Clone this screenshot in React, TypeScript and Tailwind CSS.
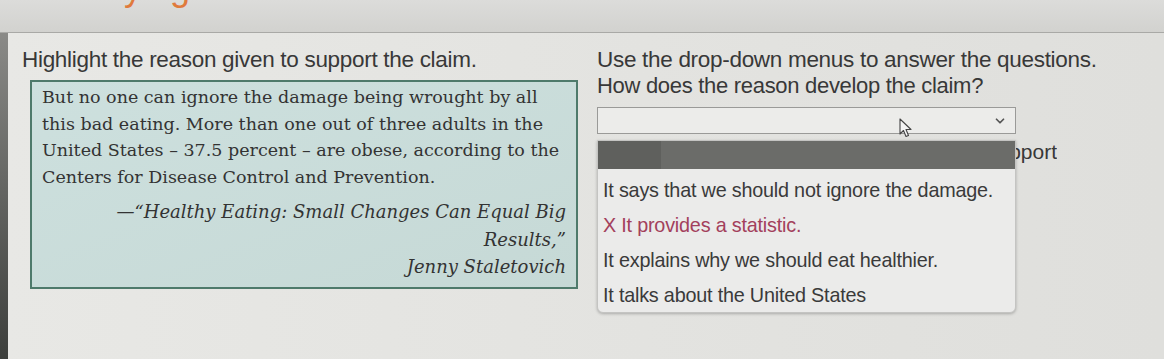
import { ChevronDown } from "lucide-react";

const sans = { fontFamily: '"Liberation Sans", Arial, sans-serif' };
const serif = { fontFamily: '"DejaVu Serif", "Liberation Serif", serif' };

const options = [
  { text: "It says that we should not ignore the damage.", wrong: false },
  { text: "X It provides a statistic.", wrong: true },
  { text: "It explains why we should eat healthier.", wrong: false },
  { text: "It talks about the United States", wrong: false },
];

export default function App() {
  return (
    <div className="w-[1164px] h-[359px] overflow-hidden bg-[#e4e4e1] text-[#383838]" style={sans}>
      {/* top strip with clipped title */}
      <div className="h-[33px] overflow-hidden bg-gradient-to-b from-[#dcdcda] to-[#d2d2cf] border-b border-[#a9a9a6] pl-[26px]">
        <div className="-mt-[33px] text-[36px] leading-[42px] text-[#e07a3c]">Identifying Reasons</div>
      </div>

      <div className="flex h-[326px]">
        <div className="w-[8px] bg-gradient-to-b from-[#8a8a87] to-[#3d3f3c]" />

        <div className="flex flex-1 bg-gradient-to-r from-[#e8e8e5] to-[#dfdfdc]">
          {/* left column */}
          <div className="w-[575px] pl-[14px] pt-[14px]">
            <p className="text-[22.5px] leading-[26px] tracking-[-0.3px]">Highlight the reason given to support the claim.</p>
            <div className="ml-[8px] mt-[7px] w-[548px] h-[209px] border-2 border-[#4e7a6b] bg-gradient-to-br from-[#cde0de] to-[#c6d9d6] pl-[10px] pr-[10px] pt-[2px] text-[#333]" style={serif}>
              <p className="text-[17.5px] leading-[26.7px] whitespace-nowrap">
                But no one can ignore the damage being wrought by all
                <br />
                this bad eating. More than one out of three adults in the
                <br />
                United States – 37.5 percent – are obese, according to the
                <br />
                Centers for Disease Control and Prevention.
              </p>
              <div className="mt-[6px] text-right italic text-[18px] whitespace-nowrap">
                <p className="leading-[29px]">—“Healthy Eating: Small Changes Can Equal Big</p>
                <p className="leading-[28px]">Results,”</p>
                <p className="leading-[25px]">Jenny Staletovich</p>
              </div>
            </div>
          </div>

          {/* right column */}
          <div className="relative flex-1 pl-[14px] pt-[14px]">
            <p className="text-[22.5px] leading-[26px] tracking-[-0.3px]">Use the drop-down menus to answer the questions.</p>
            <p className="text-[22px] leading-[26px] tracking-[-0.3px]">How does the reason develop the claim?</p>
            <div className="mt-[8px] w-[419px] h-[27px] border border-[#9a9a98] bg-[#ececea] flex items-center justify-end pr-[8px]">
              <ChevronDown size={14} strokeWidth={3} className="text-[#555]" />
            </div>
            <div className="mt-[5px] w-[460px] overflow-hidden whitespace-nowrap flex justify-end text-[21px] leading-[26px]">
              <span className="shrink-0">Which sentence best explains how the facts help support</span>
            </div>

            {/* open dropdown */}
            <div className="absolute left-[14px] top-[107px] w-[419px] h-[173px] rounded-b-[6px] bg-[#ebebea] border border-[#c4c4c2] shadow-[0_1px_3px_rgba(0,0,0,0.25)] overflow-hidden">
              <div className="flex h-[28px]">
                <div className="w-[63px] bg-[#5f605d]" />
                <div className="flex-1 bg-[#6b6c69]" />
              </div>
              <ul className="pt-[4px]">
                {options.map((o) => (
                  <li
                    key={o.text}
                    className={`h-[35px] flex items-center pl-[5px] text-[19.8px] tracking-[-0.2px] ${o.wrong ? "text-[#a3405c]" : "text-[#3a3a3a]"}`}
                  >
                    {o.text}
                  </li>
                ))}
              </ul>
            </div>

            {/* mouse cursor */}
            <svg className="absolute left-[316px] top-[85px]" width="14" height="20" viewBox="0 0 14 20">
              <path d="M1 1 L1 16 L4.5 12.5 L7 18.5 L9.5 17.5 L7 11.5 L12 11.5 Z" fill="#f4f4f4" stroke="#444" strokeWidth="1.1" strokeLinejoin="round" />
            </svg>
          </div>
        </div>
      </div>
    </div>
  );
}
